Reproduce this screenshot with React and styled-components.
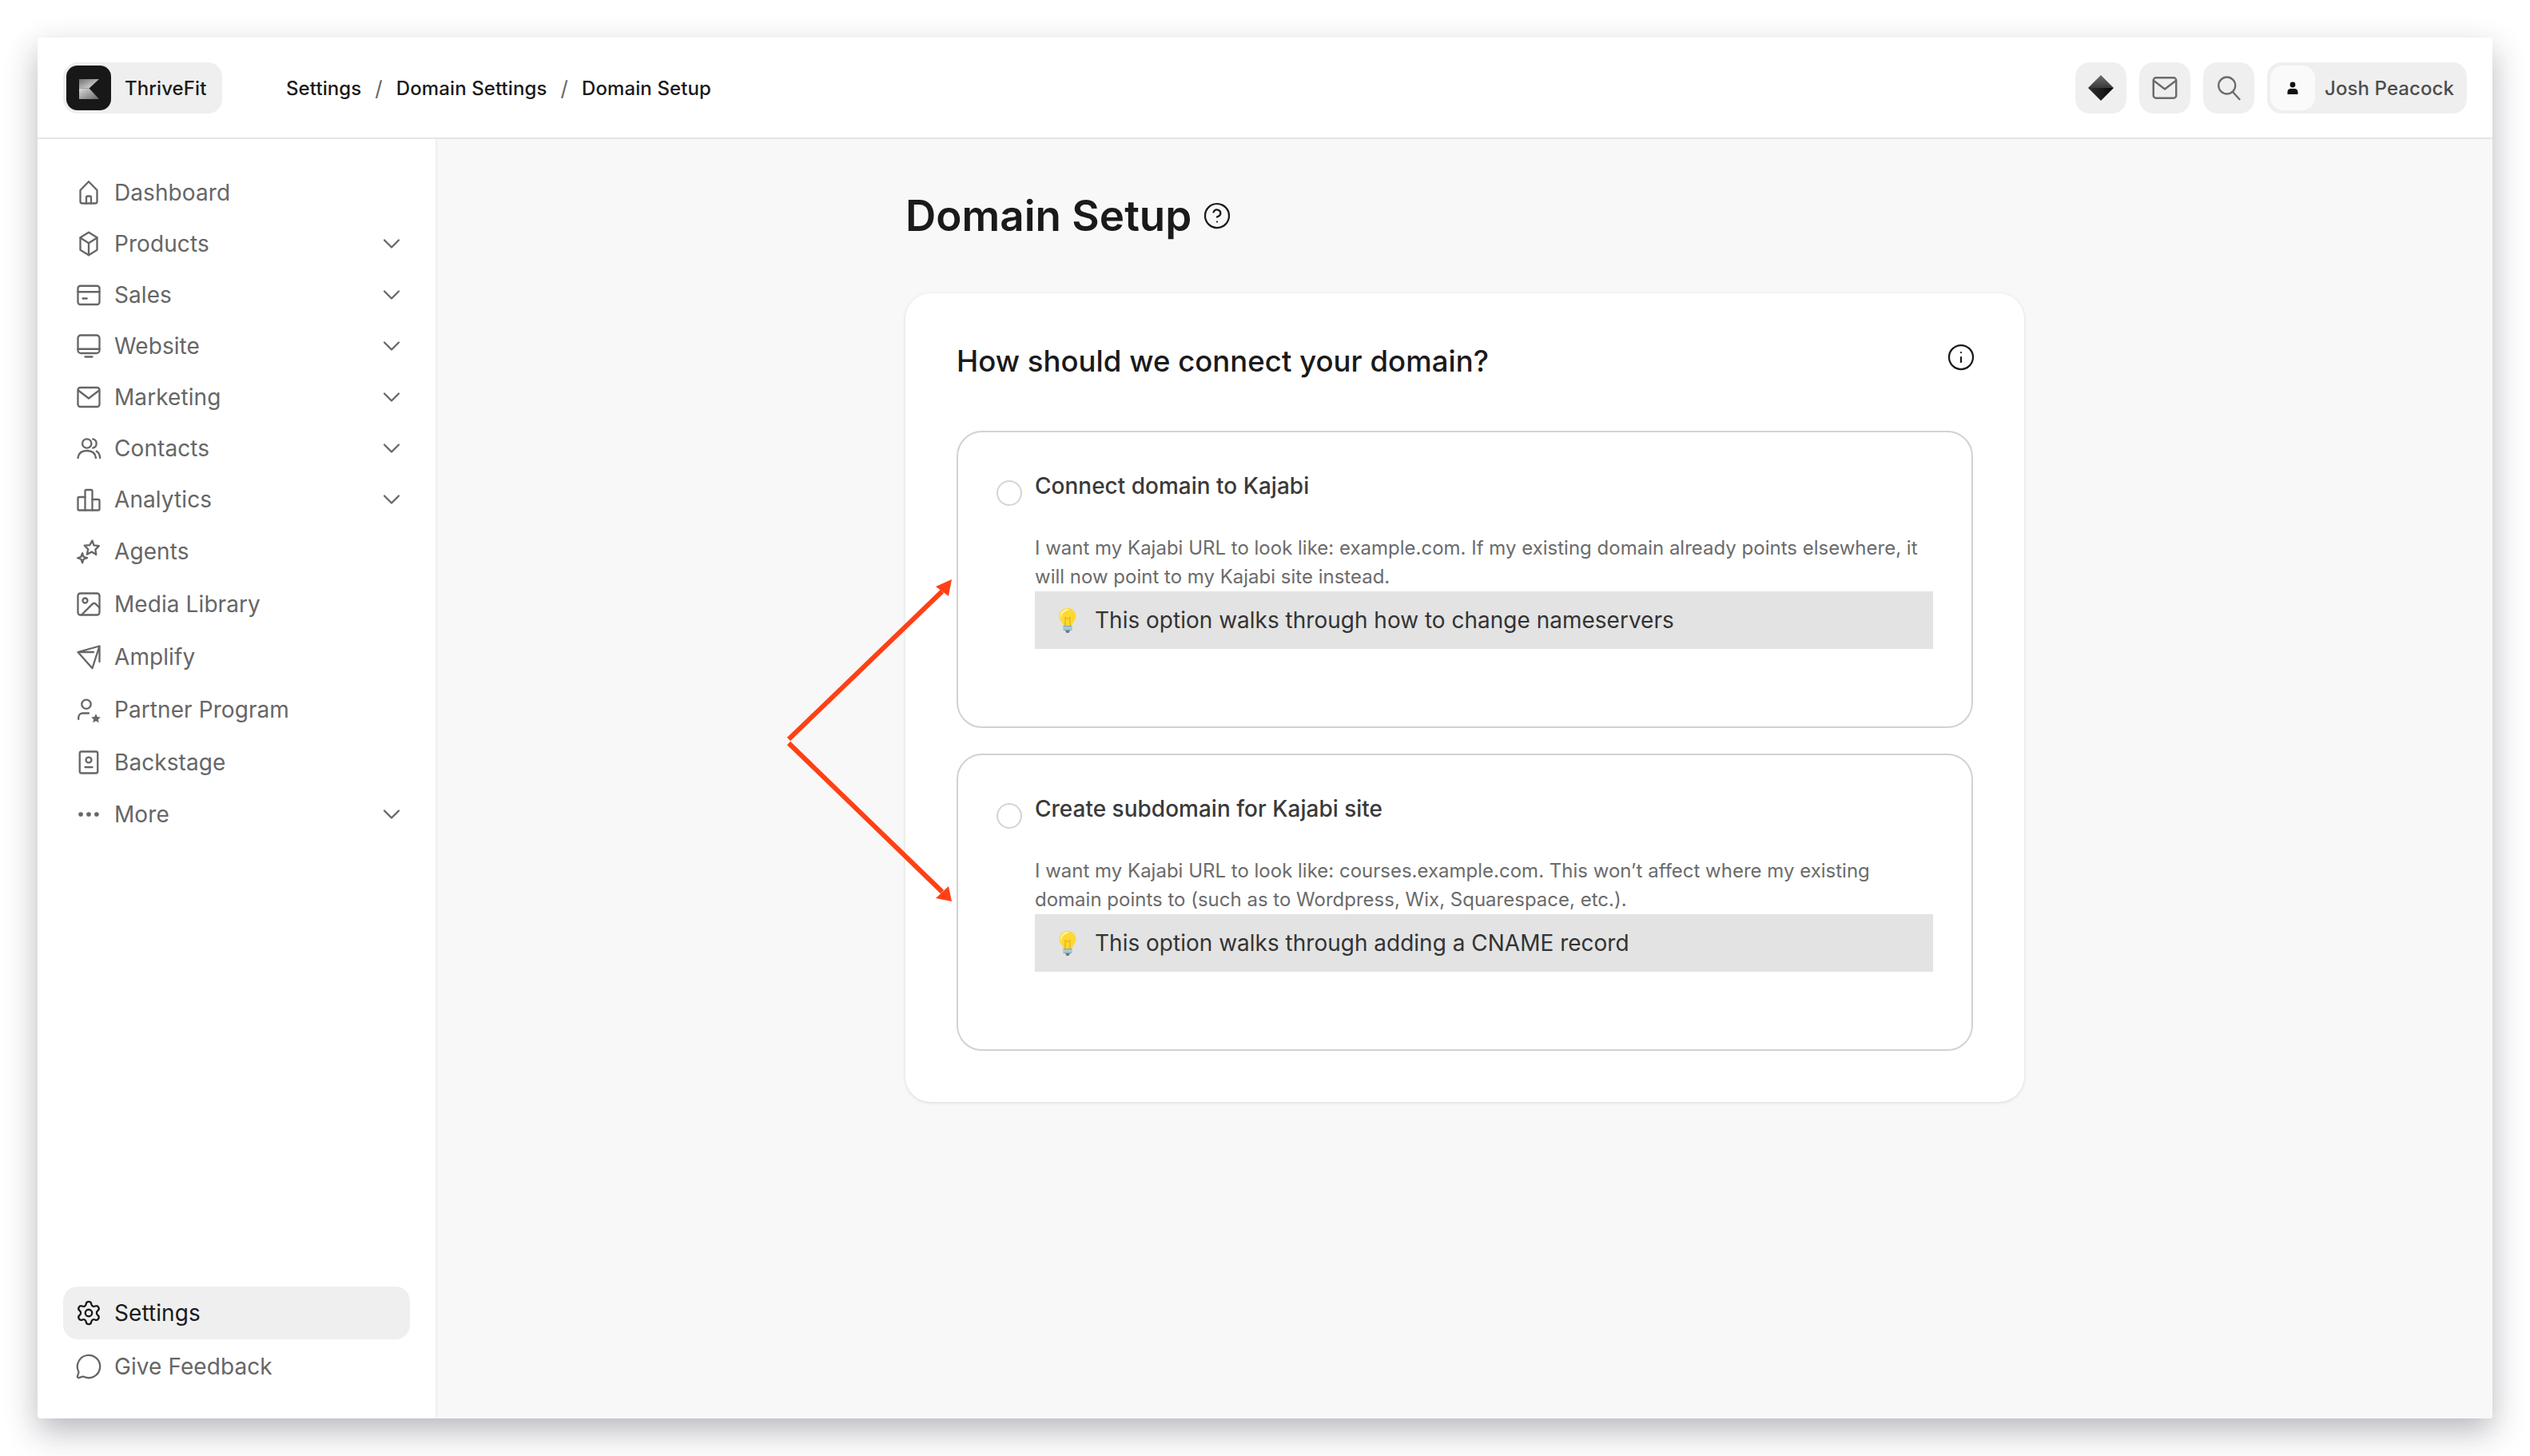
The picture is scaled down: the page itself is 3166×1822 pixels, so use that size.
import React from "react";
import styled, { createGlobalStyle } from "styled-components";
import { ChevronDown, CircleHelp, Info, Settings, MessageCircle, Ellipsis, Image } from "lucide-react";

const GlobalStyle = createGlobalStyle`
  * { box-sizing: border-box; }
  html, body { margin: 0; padding: 0; background: #fff; }
  body { font-family: Inter, "Liberation Sans", sans-serif; -webkit-font-smoothing: antialiased; }
`;

const Stroke = ({ children, size = 36 }) => (
  <svg width={size} height={size} viewBox="0 0 24 24" fill="none" stroke="currentColor" strokeWidth="1.55" strokeLinecap="round" strokeLinejoin="round">
    {children}
  </svg>
);

const HomeIcon = () => <Stroke><path d="M5 10 12 2.800l7 7.200v9.500a1.500 1.500 0 0 1-1.500 1.500h-11A1.500 1.500 0 0 1 5 19.500z" /><path d="M10 21v-5a1 1 0 0 1 1-1h2a1 1 0 0 1 1 1v5" /></Stroke>;
const BoxIcon = () => <Stroke><path d="M12 2.500 19 6.800v10.400l-7 4.300-7-4.300V6.800z" /><path d="M5 7l7 4.500L19 7M12 11.500v10" /></Stroke>;
const CardIcon = () => <Stroke><rect x="3" y="4.500" width="18" height="15.500" rx="2" /><path d="M3 9.500h18M7 15h3.500" /></Stroke>;
const MonitorIcon = () => <Stroke><rect x="3" y="3" width="18" height="15" rx="2.500" /><path d="M3 14.500h18M9 21h6" /></Stroke>;
const MailIcon = ({ size }) => <Stroke size={size}><rect x="3" y="4" width="18" height="16" rx="2" /><path d="m3.500 6.500 8.500 6.500 8.500-6.500" /></Stroke>;
const UsersIcon = () => <Stroke><circle cx="10.500" cy="8" r="3.800" /><path d="M3 20c.5-4 3.500-6 7.500-6s7 2 7.500 6" /><path d="M15.500 4.300a3.800 3.800 0 0 1 0 7.400M18.500 14.500c1.700.8 2.700 2.800 3 5.500" /></Stroke>;
const BarsIcon = () => <Stroke><path d="M3 20V11a1 1 0 0 1 1-1h5V5a1 1 0 0 1 1-1h4a1 1 0 0 1 1 1v7h5a1 1 0 0 1 1 1v7a1 1 0 0 1-1 1H4a1 1 0 0 1-1-1z" /><path d="M9 10v11M15 12v9" /></Stroke>;
const SparkIcon = () => <Stroke><path d="m15 3 1.300 3.900 4.300.5-3 3 .6 4.300-3.700-2.300-3.900 2 .9-4.200-3-3.100 4.300-.3z" /><path d="m6.800 13.500.9 3 3 .9-3 1.100-.9 3-1.200-3-2.800-1 2.800-1z" /></Stroke>;
const AmplifyIcon = () => <Stroke><path d="M3 8 21 3v13M3 8l12 13.500L21 3M3 8h13" /></Stroke>;
const SearchIcon = () => <Stroke><circle cx="10.500" cy="10" r="7" /><path d="m15.500 15.500 5.500 6" /></Stroke>;
const PartnerIcon = () => (
  <Stroke>
    <circle cx="10" cy="7.500" r="3.800" />
    <path d="M3.500 20v-1.500a3.500 3.500 0 0 1 3.500-3.500h5" />
    <path d="m18 15.500 1.200 2.500 2.700.3-2 1.900.6 2.700-2.500-1.400-2.500 1.400.6-2.700-2-1.900 2.700-.3z" fill="currentColor" stroke="none" />
  </Stroke>
);
const BackstageIcon = () => <Stroke><rect x="4.500" y="3" width="15" height="18" rx="1.500" /><circle cx="12" cy="10" r="2.300" /><path d="M9 16h6" /></Stroke>;

const LogoMark = () => (
  <svg width="56" height="56" viewBox="0 0 56 56">
    <defs>
      <linearGradient id="logoTop" x1="0" y1="0" x2="1" y2="1">
        <stop offset="0" stopColor="#6f6f6f" />
        <stop offset="1" stopColor="#eee" />
      </linearGradient>
      <linearGradient id="logoBottom" x1="0" y1="0" x2="1" y2="1">
        <stop offset="0" stopColor="#ddd" />
        <stop offset="1" stopColor="#666" />
      </linearGradient>
    </defs>
    <rect width="56" height="56" rx="14" fill="#181818" />
    <path d="M16 17h25L28.500 28.500 16 28.500z" fill="url(#logoTop)" />
    <path d="M16 28.500h12.500L41 42H16z" fill="url(#logoBottom)" />
  </svg>
);

const DiamondMark = () => (
  <svg width="32" height="32" viewBox="0 0 32 32">
    <defs>
      <linearGradient id="gemTop" x1="0" y1="0" x2="0" y2="1">
        <stop offset="0" stopColor="#6e6e6e" />
        <stop offset="1" stopColor="#3a3a3a" />
      </linearGradient>
      <linearGradient id="gemLow" x1="0" y1="0" x2="1" y2="0">
        <stop offset="0" stopColor="#333" />
        <stop offset="1" stopColor="#050505" />
      </linearGradient>
    </defs>
    <path d="M16 0 32 16H0z" fill="url(#gemTop)" />
    <path d="M0 16h32L16 32z" fill="url(#gemLow)" />
  </svg>
);

const PersonMark = () => (
  <svg width="16" height="16" viewBox="0 0 16 16" fill="#111">
    <circle cx="8" cy="4" r="3.400" />
    <path d="M1.500 16v-3c0-2.500 2-4 4-4h5c2 0 4 1.500 4 4v3z" />
  </svg>
);

const BulbMark = () => (
  <svg width="22" height="31" viewBox="0 0 22 31">
    <path d="M11 0C5 0 .5 4.500.5 10c0 4 2.500 6.500 4 9 .7 1.200 1 2.500 1 3.500h11c0-1 .3-2.300 1-3.500 1.500-2.500 4-5 4-9C21.500 4.500 17 0 11 0z" fill="#fdd835" />
    <path d="M11 1C6 1 2 4.800 2 9.500c0 1.500.4 2.800 1 4C3 7 7 3 13 2.500 12.400 1.500 11.700 1 11 1z" fill="#fff3a0" />
    <path d="M8 22V11l3 3 3-3v11" fill="none" stroke="#e0a800" strokeWidth="1" />
    <rect x="5.500" y="22" width="11" height="6" rx="1" fill="#7fa8b8" />
    <path d="M5.500 24h11M5.500 26h11" stroke="#d8e6ea" strokeWidth="1" />
    <path d="M8 28h6l-1.500 3h-3z" fill="#5d7f8e" />
  </svg>
);

const Page = styled.div`
  width: 3166px;
  height: 1822px;
  padding: 47px;
  background: #fff;
  overflow: hidden;
`;

const Window = styled.div`
  width: 3072px;
  height: 1728px;
  display: flex;
  flex-direction: column;
  background: #fff;
  border-radius: 4px;
  overflow: hidden;
  box-shadow: 0 16px 40px rgba(30, 33, 50, 0.32);
`;

const TopBar = styled.header`
  height: 127px;
  flex: none;
  display: flex;
  align-items: center;
  padding: 0 32px;
  border-bottom: 2px solid #e5e5e5;
`;

const Chip = styled.div`
  height: 64px;
  display: flex;
  align-items: center;
  background: #efefef;
  border-radius: 18px;
`;

const ChipLabel = styled.span`
  padding-top: 2px;
`;

const BrandChip = styled(Chip)`
  width: 199px;
  padding-left: 4px;
  gap: 17px;
  font-size: 24px;
  letter-spacing: 0.1px;
  font-weight: 500;
  color: #1a1a1a;
`;

const Crumbs = styled.nav`
  margin-left: 80px;
  padding-top: 2px;
  display: flex;
  align-items: center;
  font-size: 24px;
  letter-spacing: 0.1px;
  font-weight: 500;
  color: #1a1a1a;
  flex: 1;
`;

const CrumbSlash = styled.span`
  color: #666;
  font-size: 26px;
  font-weight: 400;
  margin: 0 17px;
`;

const TopActions = styled.div`
  display: flex;
  gap: 16px;
`;

const IconChip = styled(Chip)`
  width: 64px;
  justify-content: center;
  color: #6b6b6b;
`;

const UserChip = styled(Chip)`
  width: 250px;
  padding-left: 4px;
  gap: 12px;
  font-size: 24px;
  letter-spacing: 0.1px;
  font-weight: 500;
  color: #4d4d4d;
`;

const Avatar = styled.div`
  width: 56px;
  height: 56px;
  display: flex;
  align-items: center;
  justify-content: center;
  background: #fafafa;
  border-radius: 16px;
`;

const Body = styled.div`
  flex: 1;
  display: flex;
  min-height: 0;
`;

const Sidebar = styled.aside`
  width: 500px;
  flex: none;
  display: flex;
  flex-direction: column;
  justify-content: space-between;
  padding: 35px 32px 32px;
  border-right: 2px solid #f0f0f0;
`;

const NavGroup = styled.div`
  display: flex;
  flex-direction: column;
  gap: ${(p) => p.$gap || 0}px;
`;

const NavRow = styled.div`
  height: ${(p) => (p.$tall ? 66 : 64)}px;
  display: flex;
  align-items: center;
  gap: 18px;
  padding: 0 5px 0 18px;
  border-radius: 18px;
  font-size: 28px;
  letter-spacing: 0.08px;
  color: ${(p) => (p.$active ? "#1a1a1a" : "#666")};
  background: ${(p) => (p.$active ? "#efefef" : "transparent")};
`;

const NavIcon = styled.span`
  width: 28px;
  height: 28px;
  flex: none;
  display: flex;
  align-items: center;
  justify-content: center;
  svg {
    flex: none;
  }
`;

const NavLabel = styled.span`
  flex: 1;
`;

const Main = styled.main`
  flex: 1;
  position: relative;
  background: #f8f8f8;
  padding-top: 66px;
`;

const Content = styled.div`
  width: 1400px;
  margin: 0 auto;
`;

const TitleRow = styled.div`
  display: flex;
  align-items: center;
  gap: 14px;
  height: 60px;
  margin-bottom: 67px;
  color: #1a1a1a;
`;

const Title = styled.h1`
  margin: 0;
  font-size: 53px;
  font-weight: 600;
  line-height: 60px;
`;

const Card = styled.section`
  background: #fff;
  border-radius: 32px;
  padding: 63px 64px 64px;
  box-shadow: 0 1px 4px rgba(0, 0, 0, 0.13);
`;

const CardHead = styled.div`
  display: flex;
  justify-content: space-between;
  align-items: flex-start;
  height: 44px;
  margin-bottom: 65px;
  color: #1a1a1a;
`;

const CardTitle = styled.h2`
  margin: 0;
  font-size: 36.6px;
  font-weight: 500;
  line-height: 44px;
`;

const InfoSlot = styled.span`
  display: flex;
  margin: -1px -3px 0 0;
`;

const Options = styled.div`
  display: flex;
  flex-direction: column;
  gap: 32px;
`;

const Option = styled.div`
  display: flex;
  gap: 16px;
  padding: 49px 48px 97px 48px;
  border: 2px solid #d2d2d2;
  border-radius: 32px;
`;

const Radio = styled.span`
  width: 32px;
  height: 32px;
  flex: none;
  margin-top: 11px;
  border: 2px solid #d4d4d4;
  border-radius: 50%;
`;

const OptionBody = styled.div`
  flex: 1;
`;

const OptionTitle = styled.div`
  font-size: 28px;
  font-weight: 500;
  line-height: 36px;
  color: #3a3a3a;
  margin-bottom: 42px;
`;

const OptionText = styled.p`
  margin: 0;
  font-size: 24px;
  line-height: 36px;
  color: #6b6b6b;
`;

const Callout = styled.div`
  height: 72px;
  display: flex;
  align-items: center;
  gap: 23px;
  padding-left: 30px;
  background: #e3e3e3;
  font-size: 28px;
  color: #333;
`;

const Arrows = styled.svg`
  position: absolute;
  left: 418px;
  top: 520px;
`;

const navTop = [
  { label: "Dashboard", icon: <HomeIcon /> },
  { label: "Products", icon: <BoxIcon />, more: true },
  { label: "Sales", icon: <CardIcon />, more: true },
  { label: "Website", icon: <MonitorIcon />, more: true },
  { label: "Marketing", icon: <MailIcon />, more: true },
  { label: "Contacts", icon: <UsersIcon />, more: true },
  { label: "Analytics", icon: <BarsIcon />, more: true },
  { label: "Agents", icon: <SparkIcon />, tall: true },
  { label: "Media Library", icon: <Image size={36} strokeWidth={1.55} />, tall: true },
  { label: "Amplify", icon: <AmplifyIcon />, tall: true },
  { label: "Partner Program", icon: <PartnerIcon />, tall: true },
  { label: "Backstage", icon: <BackstageIcon />, tall: true },
  { label: "More", icon: <Ellipsis size={34} strokeWidth={2} />, more: true },
];

const options = [
  {
    title: "Connect domain to Kajabi",
    text: "I want my Kajabi URL to look like: example.com. If my existing domain already points elsewhere, it will now point to my Kajabi site instead.",
    hint: "This option walks through how to change nameservers",
  },
  {
    title: "Create subdomain for Kajabi site",
    text: "I want my Kajabi URL to look like: courses.example.com. This won’t affect where my existing domain points to (such as to Wordpress, Wix, Squarespace, etc.).",
    hint: "This option walks through adding a CNAME record",
  },
];

export default function App() {
  return (
    <Page>
      <GlobalStyle />
      <Window>
        <TopBar>
          <BrandChip>
            <LogoMark />
            <ChipLabel>ThriveFit</ChipLabel>
          </BrandChip>
          <Crumbs>
            Settings
            <CrumbSlash>/</CrumbSlash>
            Domain Settings
            <CrumbSlash>/</CrumbSlash>
            Domain Setup
          </Crumbs>
          <TopActions>
            <IconChip><DiamondMark /></IconChip>
            <IconChip><MailIcon size={38} /></IconChip>
            <IconChip><SearchIcon /></IconChip>
            <UserChip>
              <Avatar><PersonMark /></Avatar>
              <ChipLabel>Josh Peacock</ChipLabel>
            </UserChip>
          </TopActions>
        </TopBar>
        <Body>
          <Sidebar>
            <NavGroup>
              {navTop.map((item) => (
                <NavRow key={item.label} $tall={item.tall}>
                  <NavIcon>{item.icon}</NavIcon>
                  <NavLabel>{item.label}</NavLabel>
                  {item.more && <ChevronDown size={36} strokeWidth={1.5} />}
                </NavRow>
              ))}
            </NavGroup>
            <NavGroup $gap={1}>
              <NavRow $active $tall>
                <NavIcon><Settings size={34} strokeWidth={1.6} /></NavIcon>
                <NavLabel>Settings</NavLabel>
              </NavRow>
              <NavRow $tall>
                <NavIcon><MessageCircle size={34} strokeWidth={1.6} /></NavIcon>
                <NavLabel>Give Feedback</NavLabel>
              </NavRow>
            </NavGroup>
          </Sidebar>
          <Main>
            <Content>
              <TitleRow>
                <Title>Domain Setup</Title>
                <CircleHelp size={36} strokeWidth={1.5} />
              </TitleRow>
              <Card>
                <CardHead>
                  <CardTitle>How should we connect your domain?</CardTitle>
                  <InfoSlot><Info size={36} strokeWidth={1.5} /></InfoSlot>
                </CardHead>
                <Options>
                  {options.map((option) => (
                    <Option key={option.title}>
                      <Radio />
                      <OptionBody>
                        <OptionTitle>{option.title}</OptionTitle>
                        <OptionText>{option.text}</OptionText>
                        <Callout>
                          <BulbMark />
                          {option.hint}
                        </Callout>
                      </OptionBody>
                    </Option>
                  ))}
                </Options>
              </Card>
            </Content>
            <Arrows width="240" height="460" viewBox="0 0 240 460">
              <path d="M22 231 214 46" stroke="#ff4015" strokeWidth="6" fill="none" />
              <polygon points="226,31 206,40 222,52" fill="#ff4015" />
              <path d="M22 236 214 422" stroke="#ff4015" strokeWidth="6" fill="none" />
              <polygon points="226,434 206,430 222,415" fill="#ff4015" />
            </Arrows>
          </Main>
        </Body>
      </Window>
    </Page>
  );
}
